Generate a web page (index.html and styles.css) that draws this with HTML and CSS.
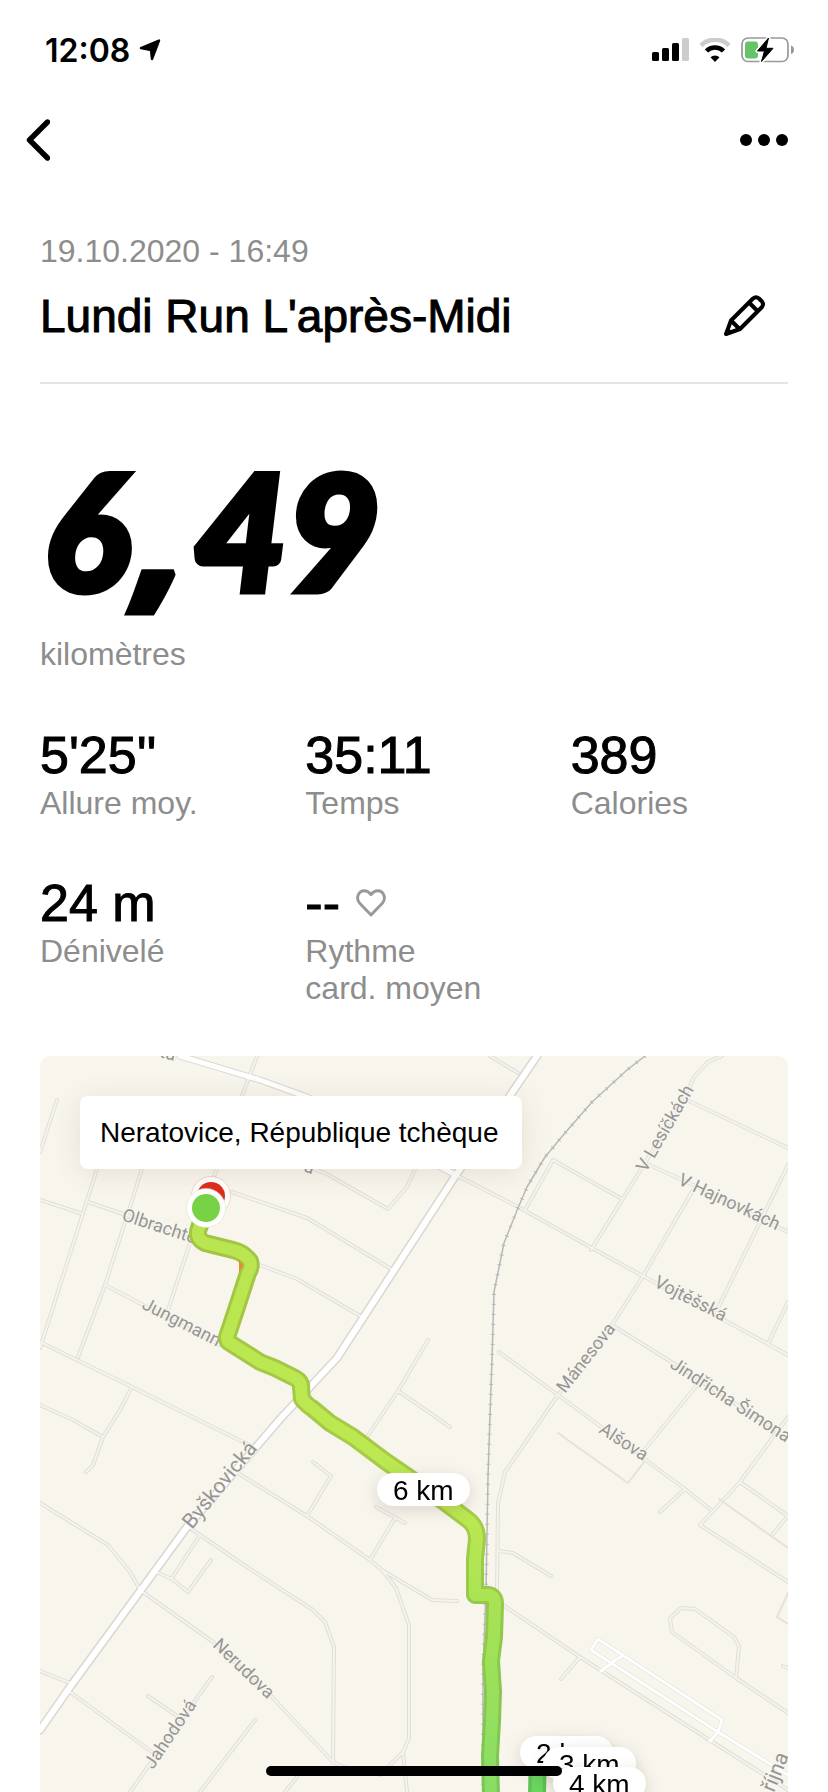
FILE: index.html
```html
<!DOCTYPE html>
<html lang="fr">

<head>
    <meta charset="UTF-8">
    <meta name="viewport" content="width=device-width, initial-scale=1.0">
    <title>Lundi Run L'après-Midi</title>
    <link rel="stylesheet" href="styles.css">
</head>

<body>
    <div class="status-bar">
        <div class="clock">
            <span>12:08</span>
            <svg width="22" height="22" viewBox="0 0 22 22">
                <path d="M20 1.5 13 20 12 11 2 9z" fill="#000" stroke="#000" stroke-width="2.4" stroke-linejoin="round" />
            </svg>
        </div>
        <div class="indicators">
            <svg width="37" height="24" viewBox="0 0 37 24">
                <rect x="0" y="14" width="7" height="9" rx="1.5" />
                <rect x="10" y="10" width="7" height="13" rx="1.5" />
                <rect x="20" y="5" width="7" height="18" rx="1.5" />
                <rect x="30" y="0" width="7" height="23" rx="1.5" fill="#ccc" />
            </svg>
            <svg width="32" height="24" viewBox="0 0 32 24">
                <path d="M2 7.5A20 20 0 0 1 30 7.5" fill="none" stroke="#ccc" stroke-width="4.6" />
                <path d="M7.5 13A12 12 0 0 1 24.500 13" fill="none" stroke="#000" stroke-width="4.6" />
                <path d="M16 24 11.500 19.300a6.500 6.500 0 0 1 9 0z" />
            </svg>
            <svg width="54" height="26" viewBox="0 0 54 26">
                <rect x="1" y="1" width="46" height="23.500" rx="6" fill="none" stroke="#999" stroke-width="1.700" />
                <path d="M50 8.500q3 1 3 4.300t-3 4.300z" fill="#999" />
                <rect x="4" y="4.500" width="13" height="17" rx="3" fill="#65c466" />
                <path d="M27.500 1 16.500 14h7L20.500 24.500 32 11.300h-7z" stroke="#fff" stroke-width="4" stroke-linejoin="round" />
                <path d="M27.500 1 16.500 14h7L20.500 24.500 32 11.300h-7z" stroke="#000" stroke-linejoin="round" />
            </svg>
        </div>
    </div>

    <nav class="nav">
        <button class="icon-btn" aria-label="Retour">
            <svg width="24" height="42" viewBox="0 0 24 42">
                <path d="M21.500 3 3.500 21 21.500 39" fill="none" stroke="#000" stroke-width="5.400" stroke-linecap="round" stroke-linejoin="round" />
            </svg>
        </button>
        <button class="icon-btn" aria-label="Plus">
            <svg width="48" height="12" viewBox="0 0 48 12">
                <circle cx="6" cy="6" r="6" />
                <circle cx="24" cy="6" r="6" />
                <circle cx="42" cy="6" r="6" />
            </svg>
        </button>
    </nav>

    <main class="run">
        <header class="run-header">
            <p class="muted">19.10.2020 - 16:49</p>
            <div class="title-row">
                <h1 class="title">Lundi Run L'après-Midi</h1>
                <button class="icon-btn" aria-label="Modifier">
                    <svg width="44" height="44" viewBox="0 0 44 44">
                        <g fill="none" stroke="#000" stroke-width="4" stroke-linejoin="round">
                            <path d="M4 40 9 26.500 31 4.500Q34 2 37 4.500L40 7.500Q42 10 40 13L18 35z" />
                            <path d="M27 8.500 36 17.500M9 26.500l8.500 8.500" />
                        </g>
                        <path d="M3 41 5.500 33 11 38.500z" />
                    </svg>
                </button>
            </div>
        </header>

        <div class="distance">6<span class="comma">,</span>49</div>
        <p class="muted">kilomètres</p>

        <dl class="stats">
            <div>
                <dd class="value">5'25''</dd>
                <dt class="muted">Allure moy.</dt>
            </div>
            <div>
                <dd class="value">35:11</dd>
                <dt class="muted">Temps</dt>
            </div>
            <div>
                <dd class="value">389</dd>
                <dt class="muted">Calories</dt>
            </div>
            <div>
                <dd class="value">24 m</dd>
                <dt class="muted">Dénivelé</dt>
            </div>
            <div>
                <dd class="value">--
                    <svg width="30" height="28" viewBox="0 0 30 28">
                        <path d="M15 26 3.700 14.300C-1 8.500 3 1.700 8.300 1.700c3 0 5 1.500 6.700 3.900 1.700-2.400 3.700-3.900 6.700-3.900 5.300 0 9.300 6.800 4.600 12.600z" fill="none" stroke="#999" stroke-width="2.900" stroke-linejoin="round" />
                    </svg>
                </dd>
                <dt class="muted">Rythme<br>card. moyen</dt>
            </div>
        </dl>

        <section class="map">
            <svg class="map-canvas" viewBox="0 0 748 736" preserveAspectRatio="xMidYMin slice">
                <defs>
                    <linearGradient id="pace" gradientUnits="userSpaceOnUse" x1="0" y1="170" x2="0" y2="736">
                        <stop offset="0" stop-color="#b9e650" />
                        <stop offset=".5" stop-color="#bde851" />
                        <stop offset=".7" stop-color="#a5e255" />
                        <stop offset="1" stop-color="#88dd65" />
                    </linearGradient>
                    <linearGradient id="pace-edge" gradientUnits="userSpaceOnUse" x1="0" y1="170" x2="0" y2="736">
                        <stop offset="0" stop-color="#a2c444" />
                        <stop offset=".5" stop-color="#a5cc47" />
                        <stop offset=".7" stop-color="#93c84b" />
                        <stop offset="1" stop-color="#7bc458" />
                    </linearGradient>
                    <path id="streets" d="M17 44 0 96M217 0 202 40M57 113 43 157 2 286 0 292M102 113 65 229 38 301M0 144 43 158M48 146 83 158 150 182M150 187 128 254M65 229 103 249 180 289M0 286 92 331 213 391M92 331 80 354 63 381 53 409 46 416M0 349 33 364 63 381M177 113 172 125M192 136 267 162 353 214M220 209 257 223 322 261M273 113 285 117 348 153 367 131 375 113M388 284 358 335 327 381M358 335 390 357 410 371
                        M416 119 480 152 550 191 603 220 728 288 748 299M450 0 478 17M682 0 668 6 654 21 647 36 605 107 582 144 551 194M647 44 748 92M485 154 513 104 582 143M605 107 660 132 748 176M653 134 603 220 572 269 518 339 465 416 458 447 457 534M748 109 677 254M748 246 728 288M572 269 633 307 745 380M459 296 518 339 645 433 671 454M657 329 602 397M748 361 700 426 660 469 748 526M700 426 748 460 732 479M645 433 620 456M458 495 473 497 511 520
                        M463 549 540 601 671 685 748 734M540 601 521 623M748 657 696 622 632 576 630 562 641 552 655 553 694 581 699 590 696 622M743 610 748 612
                        M0 447 68 489 90 516 100 534 173 586 230 639 293 706 303 711 325 716M150 472 160 479 207 511 273 554 285 566 294 591 293 706M160 479 132 522M116 516 132 523 148 536 171 504M193 414 267 460 330 504 342 514 392 544 417 545M273 406 291 420 267 460M336 451 365 467M355 462 330 504M342 514 356 532 369 569 369 682 363 696 367 736M363 696 340 719M0 615 30 627M30 636 113 697M172 621 90 736M108 640 137 660M215 664 160 736M257 721 245 736" />
                    <path id="avenue" d="M497 0 416 119 297 302 241 362 147 471 30 631 0 674" />
                    <path id="avenue-north" d="M140 0 220 24 267 41 340 80 416 119" />
                    <path id="airstrip" d="M558 583 682 664 678 676 670 685M558 583 551 594 678 676 748 719M583 600 577 603 561 615" />
                    <path id="rail" d="M605 0 587 14 552 46 525 77 505 101 487 131 478 152 464 187 454 236 452 304 450 360 448 421 446 534 443 614 443 736" />
                    <path id="route" d="M166 152 159 172Q155 182 165 187L193 194Q203 196 210 205 212 211 208 217L195 257 187 281Q187 286 190 287L220 306 235 312 255 322Q262 326 261 332L262 343Q268 350 272 352L290 367 313 381 345 405 403 445 427 463Q437 470 437 483L435 503V539L448 539Q455 540 455 548L454 581 451 605 453 635 452 665 450 700 451 740" />
                </defs>

                <rect width="748" height="736" fill="#f8f5ed" />

                <!-- roads: casing first, then fill -->
                <g class="road" stroke="#dfdfda" stroke-width="4">
                    <use href="#streets" />
                    <use href="#airstrip" />
                </g>
                <g class="road" stroke="#dad7d1">
                    <use href="#avenue" stroke-width="9" />
                    <use href="#avenue-north" stroke-width="7" />
                </g>
                <use class="road" href="#streets" stroke="#f5f3ec" stroke-width="2" />
                <use class="road" href="#airstrip" stroke="#fff" stroke-width="3" />
                <path class="road" d="M518 377 588 427 604 406M679 443 748 492M748 537 737 561 748 568" stroke="#e6e2d5" stroke-width="2" />
                <g class="road" stroke="#fff">
                    <use href="#avenue" stroke-width="6" />
                    <use href="#avenue-north" stroke-width="5" />
                </g>
                <use class="rail" href="#rail" stroke-width="1.500" />
                <use class="rail" href="#rail" stroke-width="4" stroke-dasharray="1 9" />

                <g class="street-names">
                    <text transform="translate(81 164) rotate(18)">Olbrachtova</text>
                    <text transform="translate(101 252) rotate(27)">Jungmann</text>
                    <text transform="translate(606 117) rotate(-60)">V Lesíčkách</text>
                    <text transform="translate(637 128) rotate(25)">V Hajnovkách</text>
                    <text transform="translate(613 230) rotate(27)">Vojtěšská</text>
                    <text transform="translate(525 338) rotate(-52)">Mánesova</text>
                    <text transform="translate(629 311) rotate(33)">Jindřicha Šimona</text>
                    <text transform="translate(558 376) rotate(33)">Alšova</text>
                    <text transform="translate(172 590) rotate(44)">Nerudova</text>
                    <text transform="translate(113 714) rotate(-56)">Jahodová</text>
                    <text transform="translate(119 1) rotate(14)">ta</text>
                    <text transform="translate(263 115) rotate(20)">a</text>
                    <text class="large" transform="translate(152 474) rotate(-51)">Byškovická</text>
                    <text class="large" transform="translate(734 737) rotate(-68)">října</text>
                </g>

                <g class="route">
                    <path d="M498 690 497 740" stroke="#5fc255" stroke-width="18" />
                    <path d="M498 690 497 740" stroke="#6ad65f" stroke-width="11" />
                    <use href="#route" stroke="url(#pace-edge)" stroke-width="18" />
                    <use href="#route" stroke="url(#pace)" stroke-width="12" />
                </g>
                <path d="M199 204 203 210 199 216z" fill="#ee8436" />

                <circle cx="171" cy="140" r="19.500" fill="#fff" stroke="#f3a9a5" stroke-width=".5" />
                <circle cx="171" cy="140" r="14" fill="#df2d20" />
                <circle cx="166" cy="152" r="19.500" fill="#fff" stroke="#c4ecad" stroke-width=".5" />
                <circle cx="166" cy="152" r="14" fill="#78d245" />

                <g class="pin">
                    <rect x="337" y="417" width="93" height="33" rx="16.500" />
                    <text x="353" y="444">6 km</text>
                </g>
                <g class="pin">
                    <rect x="480" y="680" width="93" height="33" rx="16.500" />
                    <text x="496" y="707">2 km</text>
                </g>
                <g class="pin">
                    <rect x="503" y="691" width="93" height="33" rx="16.500" />
                    <text x="519" y="718">3 km</text>
                </g>
                <g class="pin">
                    <rect x="513" y="711" width="93" height="33" rx="16.500" />
                    <text x="529" y="738">4 km</text>
                </g>
            </svg>
            <div class="location">Neratovice, République tchèque</div>
        </section>
    </main>

    <div class="home-indicator"></div>
</body>

</html>
```
FILE: styles.css
```css
* {
    margin: 0;
    padding: 0;
    box-sizing: border-box;
}

html,
body {
    height: 100%;
}

body {
    display: flex;
    flex-direction: column;
    background-color: #fff;
    color: #000;
    font-family: "Helvetica Neue", "Liberation Sans", Arial, sans-serif;
    overflow: hidden;
}

svg {
    display: block;
}

.icon-btn {
    border: 0;
    background: none;
    cursor: pointer;
}

.muted {
    color: #8d8d8d;
    font-size: 32px;
    line-height: 37px;
}

/* status bar */
.status-bar {
    display: flex;
    justify-content: space-between;
    align-items: center;
    flex: 0 0 100px;
    padding: 0 33px 0 45px;
}

.clock {
    display: flex;
    align-items: center;
    gap: 9px;
    font-family: Inter, sans-serif;
    font-size: 32px;
    font-weight: 600;
}

.indicators {
    display: flex;
    align-items: center;
    gap: 10px;
}

.nav {
    display: flex;
    justify-content: space-between;
    align-items: center;
    flex: 0 0 80px;
    padding: 0 40px 0 26px;
}

.run {
    display: flex;
    flex-direction: column;
    flex: 1;
    min-height: 0;
    padding: 53px 40px 0;
}

.run-header {
    padding-bottom: 41px;
    border-bottom: 2px solid #e5e5e5;
}

.title-row {
    display: flex;
    justify-content: space-between;
    align-items: center;
    margin-top: 21px;
    padding-right: 22px;
}

/* medium weight */
.title,
.value {
    font-weight: 400;
    -webkit-text-stroke: 1px #000;
}

.title {
    font-size: 46px;
    line-height: 50px;
}

/* extra heavy digits */
.distance {
    margin: 61px 0 23px;
    padding-left: 4px;
    font-family: Lato, sans-serif;
    font-size: 160px;
    font-style: italic;
    font-weight: 900;
    line-height: 168px;
    -webkit-text-stroke: 7px #000;
}

.distance .comma {
    padding: 0 8px;
    font-family: "Open Sans", sans-serif;
    font-weight: 800;
    line-height: 1px;
}

.stats {
    display: grid;
    grid-template-columns: repeat(3, 1fr);
    gap: 51px 48px;
    margin: 52px 0 49px;
}

.value {
    display: flex;
    align-items: center;
    gap: 16px;
    font-size: 52px;
    line-height: 60px;
}

/* map */
.map {
    position: relative;
    flex: 1;
    min-height: 0;
    border-radius: 10px 10px 0 0;
    overflow: hidden;
}

.map-canvas {
    width: 100%;
    height: 100%;
}

.location {
    position: absolute;
    top: 40px;
    left: 40px;
    padding: 20px 24px 20px 20px;
    border-radius: 8px;
    background-color: #fff;
    box-shadow: 0 4px 28px rgba(90, 70, 40, .12);
    font-size: 28px;
    line-height: 33px;
}

.road,
.rail,
.route {
    fill: none;
    stroke-linejoin: round;
}

.road,
.route {
    stroke-linecap: round;
}

.rail {
    stroke: #b8b8b8;
}

.street-names {
    fill: #959595;
    stroke: #f8f5ed;
    stroke-width: 2px;
    paint-order: stroke;
    font-family: Roboto, sans-serif;
    font-size: 18px;
}

.street-names .large {
    font-size: 21px;
}

.pin {
    font-size: 28px;
    filter: drop-shadow(0 4px 8px rgba(60, 50, 30, .16));
}

.pin rect {
    fill: #fff;
}

.home-indicator {
    position: fixed;
    bottom: 16px;
    left: 50%;
    width: 296px;
    height: 10px;
    margin-left: -148px;
    border-radius: 5px;
    background-color: #000;
}
```
